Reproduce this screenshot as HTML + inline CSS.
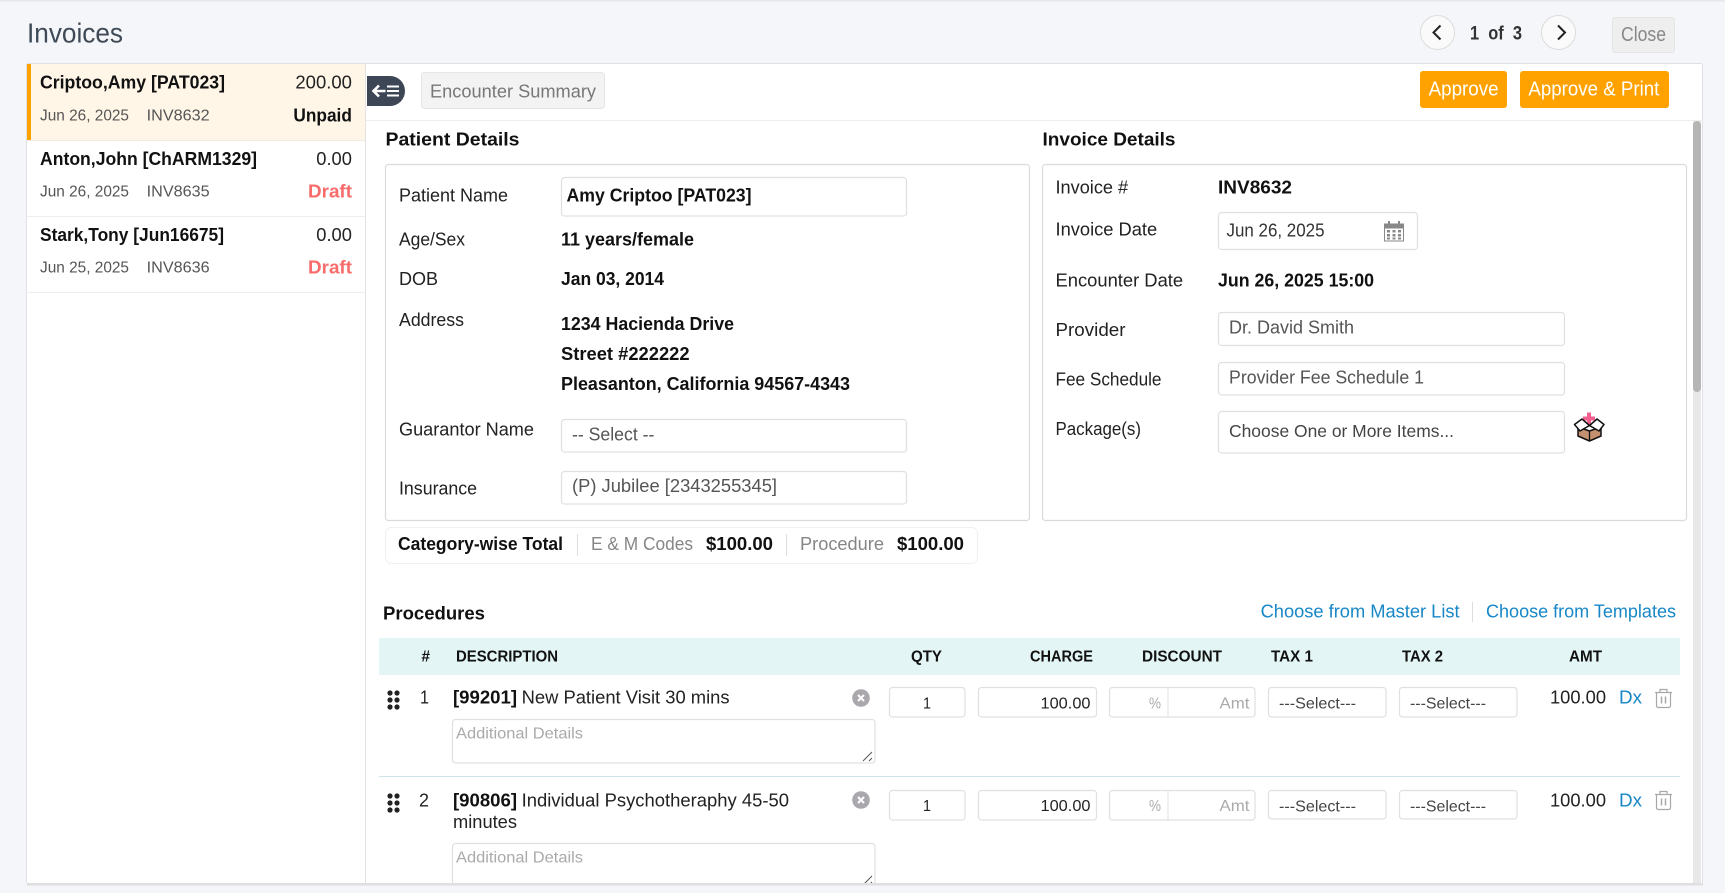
<!DOCTYPE html>
<html lang="en">
<head>
<meta charset="utf-8">
<title>Invoices</title>
<style>
html,body{margin:0;padding:0;background:#f4f6fa;width:1725px;height:893px;overflow:hidden}
svg{display:block}
text{font-family:"Liberation Sans",Arial,sans-serif;font-size:18.4px;fill:#222;white-space:pre;transform:translateY(-0.6px)}
.b{font-weight:bold;fill:#111}
.l{fill:#222}
.s{font-size:16px;fill:#555}
.g{fill:#555}
.p{font-size:16px;fill:#aaa}
.h{font-size:15.6px;font-weight:bold;fill:#111}
.a{fill:#1787c7}
.d{fill:#f96c6c;font-weight:bold}
.m{fill:#868686}
.f{fill:#fff;stroke:#e0e0e0;stroke-width:1.2}
</style>
</head>
<body>
<svg xmlns="http://www.w3.org/2000/svg" width="1725" height="893" viewBox="0 0 1725 893">
<rect width="1725" height="893" fill="#f4f6fa"/>
<rect width="1725" height="1.5" fill="#e6e7ea"/>

<text x="27" y="43" style="font-size:27.5px;fill:#3f4a56" textLength="96" lengthAdjust="spacingAndGlyphs">Invoices</text>

<!-- pager -->
<circle cx="1437.5" cy="32.5" r="17" fill="#fafafa" stroke="#dcdcdc"/>
<path d="M1440.5 25.5L1433.5 32.5L1440.5 39.5" fill="none" stroke="#222" stroke-width="2"/>
<text x="1470" y="40" class="b" style="fill:#333;font-size:19px" textLength="52" lengthAdjust="spacingAndGlyphs">1  of  3</text>
<circle cx="1558.5" cy="32.5" r="17" fill="#fafafa" stroke="#dcdcdc"/>
<path d="M1558 25.5L1565 32.5L1558 39.5" fill="none" stroke="#222" stroke-width="2"/>
<rect x="1612.5" y="17.5" width="62" height="35" rx="3" fill="#eeeeee" stroke="#e4e4e4"/>
<text x="1621" y="41.5" style="font-size:20px;fill:#888" textLength="45" lengthAdjust="spacingAndGlyphs">Close</text>

<!-- panel -->
<rect x="26.5" y="63.5" width="1676" height="820.5" rx="2" fill="#fff" stroke="#dfe1e4"/>
<rect x="27" y="883" width="1676" height="2" fill="#dfdfdf"/>

<!-- sidebar -->
<rect x="27" y="64" width="338" height="76" fill="#fff6e8"/>
<rect x="27" y="64" width="4" height="76" fill="#ffa200"/>
<line x1="27" y1="140.5" x2="365" y2="140.5" stroke="#f0e9dd"/>
<line x1="27" y1="216.5" x2="365" y2="216.5" stroke="#eeeeee"/>
<line x1="27" y1="292.5" x2="365" y2="292.5" stroke="#eeeeee"/>
<line x1="365.5" y1="64" x2="365.5" y2="883" stroke="#e2e2e2"/>

<text x="40" y="89" class="b" textLength="185" lengthAdjust="spacingAndGlyphs">Criptoo,Amy [PAT023]</text>
<text x="295.4" y="89" class="l" textLength="56.5" lengthAdjust="spacingAndGlyphs">200.00</text>
<text x="40" y="121" class="s" textLength="89" lengthAdjust="spacingAndGlyphs">Jun 26, 2025</text>
<text x="146.7" y="121" class="s" textLength="63" lengthAdjust="spacingAndGlyphs">INV8632</text>
<text x="293.4" y="122" class="b" textLength="58.5" lengthAdjust="spacingAndGlyphs">Unpaid</text>

<text x="40" y="165.5" class="b" textLength="217" lengthAdjust="spacingAndGlyphs">Anton,John [ChARM1329]</text>
<text x="316.3" y="165.5" class="l" textLength="35.6" lengthAdjust="spacingAndGlyphs">0.00</text>
<text x="40" y="197" class="s" textLength="89" lengthAdjust="spacingAndGlyphs">Jun 26, 2025</text>
<text x="146.7" y="197" class="s" textLength="63" lengthAdjust="spacingAndGlyphs">INV8635</text>
<text x="308" y="198" class="d" textLength="44" lengthAdjust="spacingAndGlyphs">Draft</text>

<text x="40" y="241.6" class="b" textLength="184" lengthAdjust="spacingAndGlyphs">Stark,Tony [Jun16675]</text>
<text x="316.3" y="241.6" class="l" textLength="35.6" lengthAdjust="spacingAndGlyphs">0.00</text>
<text x="40" y="273" class="s" textLength="89" lengthAdjust="spacingAndGlyphs">Jun 25, 2025</text>
<text x="146.7" y="273" class="s" textLength="63" lengthAdjust="spacingAndGlyphs">INV8636</text>
<text x="308" y="274.3" class="d" textLength="44" lengthAdjust="spacingAndGlyphs">Draft</text>

<!-- toolbar -->
<path d="M367 76H390A15 15 0 0 1 390 106H367Z" fill="#3d4654"/>
<path d="M373.5 91H385.5M379 85.5L373.5 91L379 96.5" fill="none" stroke="#fff" stroke-width="2.6"/>
<path d="M387 86.5H399M387 91H399M387 95.5H399" fill="none" stroke="#fff" stroke-width="2"/>
<rect x="421.5" y="72.5" width="183" height="36" rx="3" fill="#f3f3f3" stroke="#e6e6e6"/>
<text x="430" y="98" style="fill:#777" textLength="166" lengthAdjust="spacingAndGlyphs">Encounter Summary</text>
<rect x="1420" y="71" width="87" height="37" rx="3" fill="#ffa200"/>
<text x="1428.6" y="96" style="font-size:20px;fill:#fff" textLength="70" lengthAdjust="spacingAndGlyphs">Approve</text>
<rect x="1520" y="71" width="149" height="37" rx="3" fill="#ffa200"/>
<text x="1528.4" y="96" style="font-size:20px;fill:#fff" textLength="131" lengthAdjust="spacingAndGlyphs">Approve &amp; Print</text>
<line x1="366" y1="120.5" x2="1703" y2="120.5" stroke="#eeeeee"/>

<!-- scrollbar -->
<rect x="1693" y="121" width="8" height="762" fill="#e8e8e8"/>
<rect x="1693" y="121" width="8" height="271" rx="4" fill="#b5b5b5"/>

<!-- Patient details -->
<text x="385.5" y="146" class="b" textLength="134" lengthAdjust="spacingAndGlyphs">Patient Details</text>
<rect x="385.5" y="164.5" width="644" height="356" rx="3" class="f" style="stroke:#dadada"/>
<text x="399" y="202" class="l" textLength="109" lengthAdjust="spacingAndGlyphs">Patient Name</text>
<rect x="561.5" y="177.5" width="345" height="38.5" rx="3" class="f"/>
<text x="566.5" y="202" class="b" textLength="185" lengthAdjust="spacingAndGlyphs">Amy Criptoo [PAT023]</text>
<text x="399" y="246" class="l" textLength="66" lengthAdjust="spacingAndGlyphs">Age/Sex</text>
<text x="561" y="246" class="b" textLength="133" lengthAdjust="spacingAndGlyphs">11 years/female</text>
<text x="399" y="285.6" class="l" textLength="39" lengthAdjust="spacingAndGlyphs">DOB</text>
<text x="561" y="285.6" class="b" textLength="103" lengthAdjust="spacingAndGlyphs">Jan 03, 2014</text>
<text x="399" y="326.6" class="l" textLength="65" lengthAdjust="spacingAndGlyphs">Address</text>
<text x="561" y="330.6" class="b" textLength="173" lengthAdjust="spacingAndGlyphs">1234 Hacienda Drive</text>
<text x="561" y="360.6" class="b" textLength="128.6" lengthAdjust="spacingAndGlyphs">Street #222222</text>
<text x="561" y="390.6" class="b" textLength="289" lengthAdjust="spacingAndGlyphs">Pleasanton, California 94567-4343</text>
<text x="399" y="436" class="l" textLength="135" lengthAdjust="spacingAndGlyphs">Guarantor Name</text>
<rect x="561.5" y="419.5" width="345" height="32.5" rx="3" class="f"/>
<text x="572" y="441" class="g" textLength="82.4" lengthAdjust="spacingAndGlyphs">-- Select --</text>
<text x="399" y="495" class="l" textLength="78" lengthAdjust="spacingAndGlyphs">Insurance</text>
<rect x="561.5" y="471.5" width="345" height="32.5" rx="3" class="f"/>
<text x="572" y="492.7" class="g" textLength="205" lengthAdjust="spacingAndGlyphs">(P) Jubilee [2343255345]</text>

<!-- Category total -->
<rect x="385.5" y="527.5" width="592" height="36" rx="6" fill="#fff" stroke="#f0f0f0"/>
<text x="398" y="550.7" class="b" textLength="165" lengthAdjust="spacingAndGlyphs">Category-wise Total</text>
<line x1="577.5" y1="534" x2="577.5" y2="556" stroke="#dddddd"/>
<text x="591" y="550.7" class="m" textLength="102" lengthAdjust="spacingAndGlyphs">E &amp; M Codes</text>
<text x="706" y="550.7" class="b" textLength="67" lengthAdjust="spacingAndGlyphs">$100.00</text>
<line x1="786.5" y1="534" x2="786.5" y2="556" stroke="#dddddd"/>
<text x="800" y="550.7" class="m" textLength="84" lengthAdjust="spacingAndGlyphs">Procedure</text>
<text x="897" y="550.7" class="b" textLength="67" lengthAdjust="spacingAndGlyphs">$100.00</text>

<!-- Invoice details -->
<text x="1042.5" y="146" class="b" textLength="133" lengthAdjust="spacingAndGlyphs">Invoice Details</text>
<rect x="1042.5" y="164.5" width="644" height="356" rx="3" class="f" style="stroke:#dadada"/>
<text x="1055.5" y="194" class="l" textLength="72.6" lengthAdjust="spacingAndGlyphs">Invoice #</text>
<text x="1218" y="194" class="b" textLength="74" lengthAdjust="spacingAndGlyphs">INV8632</text>
<text x="1055.5" y="236" class="l" textLength="101.7" lengthAdjust="spacingAndGlyphs">Invoice Date</text>
<rect x="1218.5" y="212.5" width="199" height="37" rx="3" class="f"/>
<text x="1226.5" y="237" style="fill:#333" textLength="98" lengthAdjust="spacingAndGlyphs">Jun 26, 2025</text>
<!-- calendar -->
<rect x="1384.5" y="224" width="19" height="17" fill="#fff" stroke="#888"/>
<rect x="1384" y="223.5" width="20" height="5" fill="#888"/>
<path d="M1389 221v4M1399 221v4" stroke="#888" stroke-width="2"/>
<g fill="#888"><rect x="1387" y="230" width="3" height="2.5"/><rect x="1392.5" y="230" width="3" height="2.5"/><rect x="1398" y="230" width="3" height="2.5"/><rect x="1387" y="234" width="3" height="2.5"/><rect x="1392.5" y="234" width="3" height="2.5"/><rect x="1398" y="234" width="3" height="2.5"/><rect x="1387" y="237.5" width="3" height="2"/><rect x="1392.5" y="237.5" width="3" height="2"/><rect x="1398" y="237.5" width="3" height="2"/></g>
<text x="1055.5" y="287" class="l" textLength="127.6" lengthAdjust="spacingAndGlyphs">Encounter Date</text>
<text x="1218" y="287" class="b" textLength="156" lengthAdjust="spacingAndGlyphs">Jun 26, 2025 15:00</text>
<text x="1055.5" y="336.7" class="l" textLength="70" lengthAdjust="spacingAndGlyphs">Provider</text>
<rect x="1218.5" y="312.5" width="346" height="33" rx="3" class="f"/>
<text x="1229" y="334" class="g" textLength="125" lengthAdjust="spacingAndGlyphs">Dr. David Smith</text>
<text x="1055.5" y="386" class="l" textLength="106" lengthAdjust="spacingAndGlyphs">Fee Schedule</text>
<rect x="1218.5" y="362.5" width="346" height="32.5" rx="3" class="f"/>
<text x="1229" y="384" class="g" textLength="195" lengthAdjust="spacingAndGlyphs">Provider Fee Schedule 1</text>
<text x="1055.5" y="435.7" class="l" textLength="85.5" lengthAdjust="spacingAndGlyphs">Package(s)</text>
<rect x="1218.5" y="411.5" width="346" height="41.5" rx="3" class="f"/>
<text x="1229" y="437.7" style="fill:#444;font-size:17.6px" textLength="225" lengthAdjust="spacingAndGlyphs">Choose One or More Items...</text>
<!-- package icon -->
<path d="M1589 412.500v12M1583 418.500h12" stroke="#f1608e" stroke-width="4"/>
<path d="M1578 427V436L1589.500 441L1601 436V427L1589.500 431Z" fill="#c49170" stroke="#111" stroke-width="1.5" stroke-linejoin="round"/>
<path d="M1589.500 431V441" stroke="#111" stroke-width="1.3"/>
<path d="M1574.500 424.500L1582 419L1589.500 425.500L1580 431Z" fill="#fff" stroke="#111" stroke-width="1.5" stroke-linejoin="round"/>
<path d="M1604 424.500L1597 419L1589.500 425.500L1599 431Z" fill="#fff" stroke="#111" stroke-width="1.5" stroke-linejoin="round"/>

<!-- Procedures -->
<text x="383" y="620" class="b" textLength="102" lengthAdjust="spacingAndGlyphs">Procedures</text>
<text x="1260.6" y="618" class="a" textLength="199" lengthAdjust="spacingAndGlyphs">Choose from Master List</text>
<line x1="1472.5" y1="602" x2="1472.5" y2="622" stroke="#dddddd"/>
<text x="1486" y="618" class="a" textLength="190" lengthAdjust="spacingAndGlyphs">Choose from Templates</text>

<rect x="379" y="638" width="1301" height="37" fill="#e4f5f5"/>
<text x="421.5" y="662" class="h" textLength="8.5" lengthAdjust="spacingAndGlyphs">#</text>
<text x="456" y="662" class="h" textLength="102" lengthAdjust="spacingAndGlyphs">DESCRIPTION</text>
<text x="911" y="662" class="h" textLength="31" lengthAdjust="spacingAndGlyphs">QTY</text>
<text x="1030" y="662" class="h" textLength="63" lengthAdjust="spacingAndGlyphs">CHARGE</text>
<text x="1142" y="662" class="h" textLength="80" lengthAdjust="spacingAndGlyphs">DISCOUNT</text>
<text x="1271" y="662" class="h" textLength="42" lengthAdjust="spacingAndGlyphs">TAX 1</text>
<text x="1402" y="662" class="h" textLength="41" lengthAdjust="spacingAndGlyphs">TAX 2</text>
<text x="1569" y="662" class="h" textLength="33" lengthAdjust="spacingAndGlyphs">AMT</text>

<!-- Row 1 -->
<g fill="#222"><circle cx="390" cy="693" r="2.6"/><circle cx="397" cy="693" r="2.6"/><circle cx="390" cy="700" r="2.6"/><circle cx="397" cy="700" r="2.6"/><circle cx="390" cy="707" r="2.6"/><circle cx="397" cy="707" r="2.6"/></g>
<text x="420" y="704" class="l" textLength="9" lengthAdjust="spacingAndGlyphs">1</text>
<text x="453" y="704" class="b" textLength="64" lengthAdjust="spacingAndGlyphs">[99201]</text>
<text x="521.6" y="704" class="l" textLength="208" lengthAdjust="spacingAndGlyphs">New Patient Visit 30 mins</text>
<circle cx="861" cy="698" r="8.8" fill="#aaa8ad"/>
<path d="M858 695l6 6M864 695l-6 6" stroke="#fff" stroke-width="2"/>
<rect x="452.5" y="719.5" width="422.5" height="43.5" rx="3" class="f"/>
<text x="456" y="739.3" class="p" textLength="127" lengthAdjust="spacingAndGlyphs">Additional Details</text>
<path d="M863 761l9-9M869 761l3-3" stroke="#555" stroke-width="1"/>
<rect x="889.5" y="687.5" width="75.5" height="29.5" rx="3" class="f"/>
<text x="923" y="709" class="s" style="fill:#222" textLength="8" lengthAdjust="spacingAndGlyphs">1</text>
<rect x="978.5" y="687.5" width="118" height="29.5" rx="3" class="f"/>
<text x="1040.5" y="709" class="s" style="fill:#222" textLength="50" lengthAdjust="spacingAndGlyphs">100.00</text>
<rect x="1109.5" y="687.5" width="145.5" height="29.5" rx="3" class="f"/>
<line x1="1168" y1="688" x2="1168" y2="717" stroke="#e0e0e0"/>
<text x="1149" y="709" class="p" textLength="12" lengthAdjust="spacingAndGlyphs">%</text>
<text x="1219.5" y="709" class="p" textLength="30" lengthAdjust="spacingAndGlyphs">Amt</text>
<rect x="1268.5" y="687.5" width="117.5" height="29.5" rx="3" class="f"/>
<text x="1279" y="709" class="s" style="fill:#444" textLength="77" lengthAdjust="spacingAndGlyphs">---Select---</text>
<rect x="1399.5" y="687.5" width="117.5" height="29.5" rx="3" class="f"/>
<text x="1410" y="709" class="s" style="fill:#444" textLength="76" lengthAdjust="spacingAndGlyphs">---Select---</text>
<text x="1550" y="704" class="l" textLength="56" lengthAdjust="spacingAndGlyphs">100.00</text>
<text x="1619" y="704" class="a" textLength="23" lengthAdjust="spacingAndGlyphs">Dx</text>
<g fill="none" stroke="#a8a8a8" stroke-width="1.2">
<path d="M1655 692.500H1672M1660 692.500V689.500H1667V692.500"/>
<path d="M1656.500 693V705.500Q1656.500 707.500 1658.500 707.500H1668.500Q1670.500 707.500 1670.500 705.500V693"/>
<path d="M1661.500 696.500V703.500M1665.500 696.500V703.500" stroke-width="1.5"/>
</g>

<line x1="379" y1="776.5" x2="1680" y2="776.5" stroke="#cfe3e8"/>

<!-- Row 2 -->
<g fill="#222"><circle cx="390" cy="796" r="2.6"/><circle cx="397" cy="796" r="2.6"/><circle cx="390" cy="803" r="2.6"/><circle cx="397" cy="803" r="2.6"/><circle cx="390" cy="810" r="2.6"/><circle cx="397" cy="810" r="2.6"/></g>
<text x="419" y="807" class="l" textLength="10" lengthAdjust="spacingAndGlyphs">2</text>
<text x="453" y="807" class="b" textLength="64" lengthAdjust="spacingAndGlyphs">[90806]</text>
<text x="521.6" y="807" class="l" textLength="267.4" lengthAdjust="spacingAndGlyphs">Individual Psychotheraphy 45-50</text>
<text x="453" y="828.7" class="l" textLength="64" lengthAdjust="spacingAndGlyphs">minutes</text>
<circle cx="861" cy="800" r="8.8" fill="#aaa8ad"/>
<path d="M858 797l6 6M864 797l-6 6" stroke="#fff" stroke-width="2"/>
<rect x="889.5" y="790.5" width="75.5" height="29.5" rx="3" class="f"/>
<text x="923" y="811.7" class="s" style="fill:#222" textLength="8" lengthAdjust="spacingAndGlyphs">1</text>
<rect x="978.5" y="790.5" width="118" height="29.5" rx="3" class="f"/>
<text x="1040.5" y="811.7" class="s" style="fill:#222" textLength="50" lengthAdjust="spacingAndGlyphs">100.00</text>
<rect x="1109.5" y="790.5" width="145.5" height="29.5" rx="3" class="f"/>
<line x1="1168" y1="791" x2="1168" y2="820" stroke="#e0e0e0"/>
<text x="1149" y="811.7" class="p" textLength="12" lengthAdjust="spacingAndGlyphs">%</text>
<text x="1219.5" y="811.7" class="p" textLength="30" lengthAdjust="spacingAndGlyphs">Amt</text>
<rect x="1268.5" y="790.5" width="117.5" height="28.5" rx="3" class="f"/>
<text x="1279" y="812" class="s" style="fill:#444" textLength="77" lengthAdjust="spacingAndGlyphs">---Select---</text>
<rect x="1399.5" y="790.5" width="117.5" height="28.5" rx="3" class="f"/>
<text x="1410" y="812" class="s" style="fill:#444" textLength="76" lengthAdjust="spacingAndGlyphs">---Select---</text>
<text x="1550" y="807" class="l" textLength="56" lengthAdjust="spacingAndGlyphs">100.00</text>
<text x="1619" y="807" class="a" textLength="23" lengthAdjust="spacingAndGlyphs">Dx</text>
<g fill="none" stroke="#a8a8a8" stroke-width="1.2">
<path d="M1655 794.500H1672M1660 794.500V791.500H1667V794.500"/>
<path d="M1656.500 795V807.500Q1656.500 809.500 1658.500 809.500H1668.500Q1670.500 809.500 1670.500 807.500V795"/>
<path d="M1661.500 798.500V805.500M1665.500 798.500V805.500" stroke-width="1.5"/>
</g>
<rect x="452.5" y="843.5" width="422.5" height="60" rx="3" class="f"/>
<text x="456" y="863" class="p" textLength="127" lengthAdjust="spacingAndGlyphs">Additional Details</text>
<path d="M863 885l9-9M869 885l3-3" stroke="#555" stroke-width="1"/>

<!-- bottom clip -->
<rect x="27" y="883" width="1676" height="2.5" fill="#dfdfdf"/>
<rect x="0" y="885.5" width="1725" height="8" fill="#f4f6fa"/>
</svg>
</body>
</html>
